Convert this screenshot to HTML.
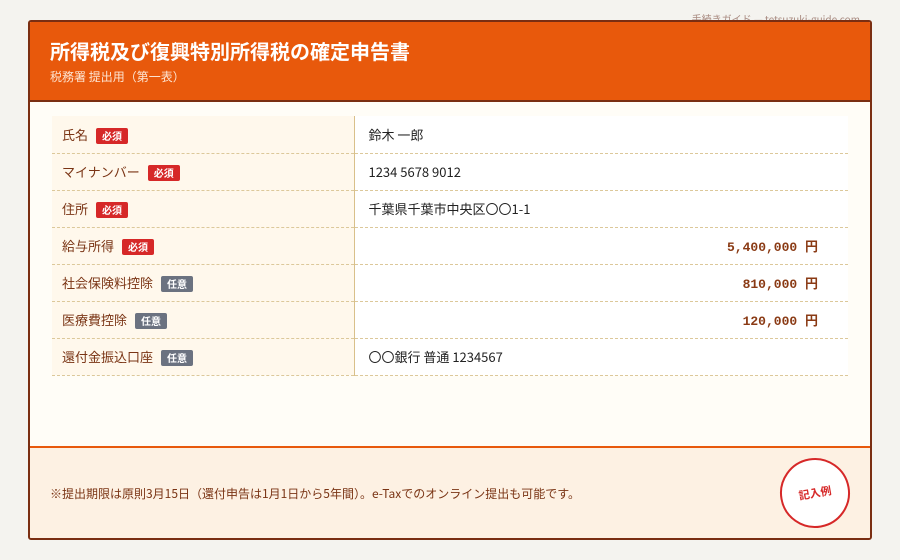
<!DOCTYPE html>
<html><head><meta charset="utf-8"><style>
*{margin:0;padding:0;box-sizing:border-box}
body{width:900px;height:560px;background:#f4f3ef;font-family:"Noto Sans CJK JP",sans-serif;position:relative;overflow:hidden}
.site{position:absolute;right:40px;top:11px;font-size:10px;color:#a88a80}
.card{position:absolute;left:28px;top:20px;width:844px;height:520px;border:2px solid #7a2e12;border-radius:3px;background:#fffdf7;overflow:hidden}
.hd{height:80px;background:#e8590c;border-bottom:2px solid #7a2e12;padding:15px 0 0 20px;color:#fff}
.hd h1{font-size:20px;font-weight:bold;line-height:28px}
.hd p{font-size:12px;margin-top:3px;color:#fde5d3}
table{position:absolute;left:22px;top:94px;width:796px;border-collapse:collapse}
td{height:37px;border-bottom:1px dashed #dcc89a;font-size:13px;vertical-align:middle}
td.l{width:302px;background:#fff8ec;border-right:1px solid #d9c08a;padding-left:10px;color:#7a3414}
td.v{padding-left:14px;color:#222;background:#fff}
td.n{text-align:right;padding-right:30px;font-family:"Liberation Mono","Noto Sans CJK JP",monospace;font-weight:bold;color:#8a3a14;background:#fff}
.b{display:inline-block;font-size:10px;color:#fff;padding:0 6px;line-height:16px;border-radius:2px;margin-left:8px;font-weight:bold;vertical-align:middle}
.r{background:#d62828}.g{background:#6b7280}
.ft{position:absolute;left:0;right:0;top:424px;bottom:0;background:#fdf1e3;border-top:2px solid #e8590c}
.ft p{position:absolute;left:20px;top:37px;font-size:12px;color:#7a3414}
.st{position:absolute;left:750px;top:10px;width:70px;height:70px;border:2px solid #d62828;border-radius:50%;background:#fff;color:#d62828;font-size:11px;font-weight:bold;display:flex;align-items:center;justify-content:center;transform:rotate(-10deg)}
</style></head><body>
<div class="site">手続きガイド — tetsuzuki-guide.com</div>
<div class="card">
<div class="hd"><h1>所得税及び復興特別所得税の確定申告書</h1><p>税務署 提出用（第一表）</p></div>
<table>
<tr><td class="l">氏名<span class="b r">必須</span></td><td class="v">鈴木 一郎</td></tr>
<tr><td class="l">マイナンバー<span class="b r">必須</span></td><td class="v">1234 5678 9012</td></tr>
<tr><td class="l">住所<span class="b r">必須</span></td><td class="v">千葉県千葉市中央区〇〇1-1</td></tr>
<tr><td class="l">給与所得<span class="b r">必須</span></td><td class="n">5,400,000 円</td></tr>
<tr><td class="l">社会保険料控除<span class="b g">任意</span></td><td class="n">810,000 円</td></tr>
<tr><td class="l">医療費控除<span class="b g">任意</span></td><td class="n">120,000 円</td></tr>
<tr><td class="l">還付金振込口座<span class="b g">任意</span></td><td class="v">〇〇銀行 普通 1234567</td></tr>
</table>
<div class="ft"><p>※提出期限は原則3月15日（還付申告は1月1日から5年間）。e-Taxでのオンライン提出も可能です。</p><div class="st">記入例</div></div>
</div>
</body></html>
